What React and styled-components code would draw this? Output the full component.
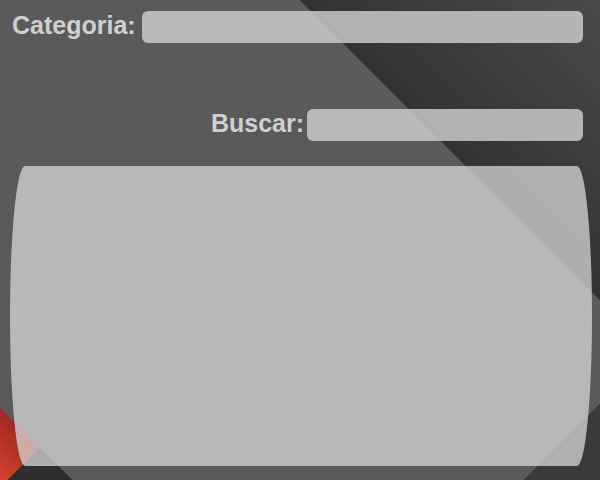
import React from "react";
import styled, { createGlobalStyle } from "styled-components";

/* 전역 스타일 */
const GlobalStyle = createGlobalStyle`
  html, body {
    margin: 0;
    padding: 0;
    background: #5a5a5a;
  }
`;

function App() {
  return (
    <>
      <GlobalStyle />
      <Page>
        <FieldRow>
          <Label htmlFor="categoria">Categoria:</Label>
          <TextField id="categoria" type="text" />
        </FieldRow>

        <FieldRow $alignEnd>
          <Label htmlFor="buscar" $tight>Buscar:</Label>
          <TextField id="buscar" type="text" $width="276px" />
        </FieldRow>

        <ResultList role="listbox" />
      </Page>
    </>
  );
}

const Page = styled.div`
  box-sizing: border-box;
  width: 100%;
  height: 480px;
  padding: 11px 8px 0 10px;
  overflow: hidden;
  font-family: "Liberation Sans", Arial, sans-serif;
  background:
    conic-gradient(
      from 0deg at 40px 448px,
      transparent 0deg 135deg,
      #2e2e2e 135deg 225deg,
      transparent 225deg
    ),
    linear-gradient(
      225deg,
      transparent 93.3%,
      #9c2a20 93.3%,
      #d8402e 100%
    ),
    linear-gradient(
      135deg,
      transparent 92.9%,
      #3a3a3a 92.9%
    ),
    linear-gradient(
      45deg,
      transparent 72.2%,
      #333333 72.2%,
      #4a4a4a 100%
    ),
    #5a5a5a;
`;

const FieldRow = styled.div`
  display: flex;
  align-items: center;
  justify-content: ${({ $alignEnd }) => ($alignEnd ? "flex-end" : "flex-start")};
  height: 32px;
  padding: 0 9px 0 2px;
  margin-bottom: ${({ $alignEnd }) => ($alignEnd ? "25px" : "66px")};
`;

const Label = styled.label`
  font-size: 25px;
  font-weight: bold;
  color: #d0d0d0;
  padding-bottom: 3px;
  margin-right: ${({ $tight }) => ($tight ? "3px" : "6px")};
  white-space: nowrap;
`;

const TextField = styled.input`
  box-sizing: border-box;
  height: 32px;
  border: none;
  outline: none;
  border-radius: 6px;
  padding: 0 8px;
  font-family: inherit;
  font-size: 16px;
  background: rgba(206, 206, 206, 0.82);
  ${({ $width }) => ($width ? `width: ${$width};` : "flex: 1; min-width: 0;")}
`;

const ResultList = styled.div`
  box-sizing: border-box;
  height: 300px;
  border-radius: 15px / 50%;
  background: rgba(217, 217, 217, 0.74);
`;

export default App;
